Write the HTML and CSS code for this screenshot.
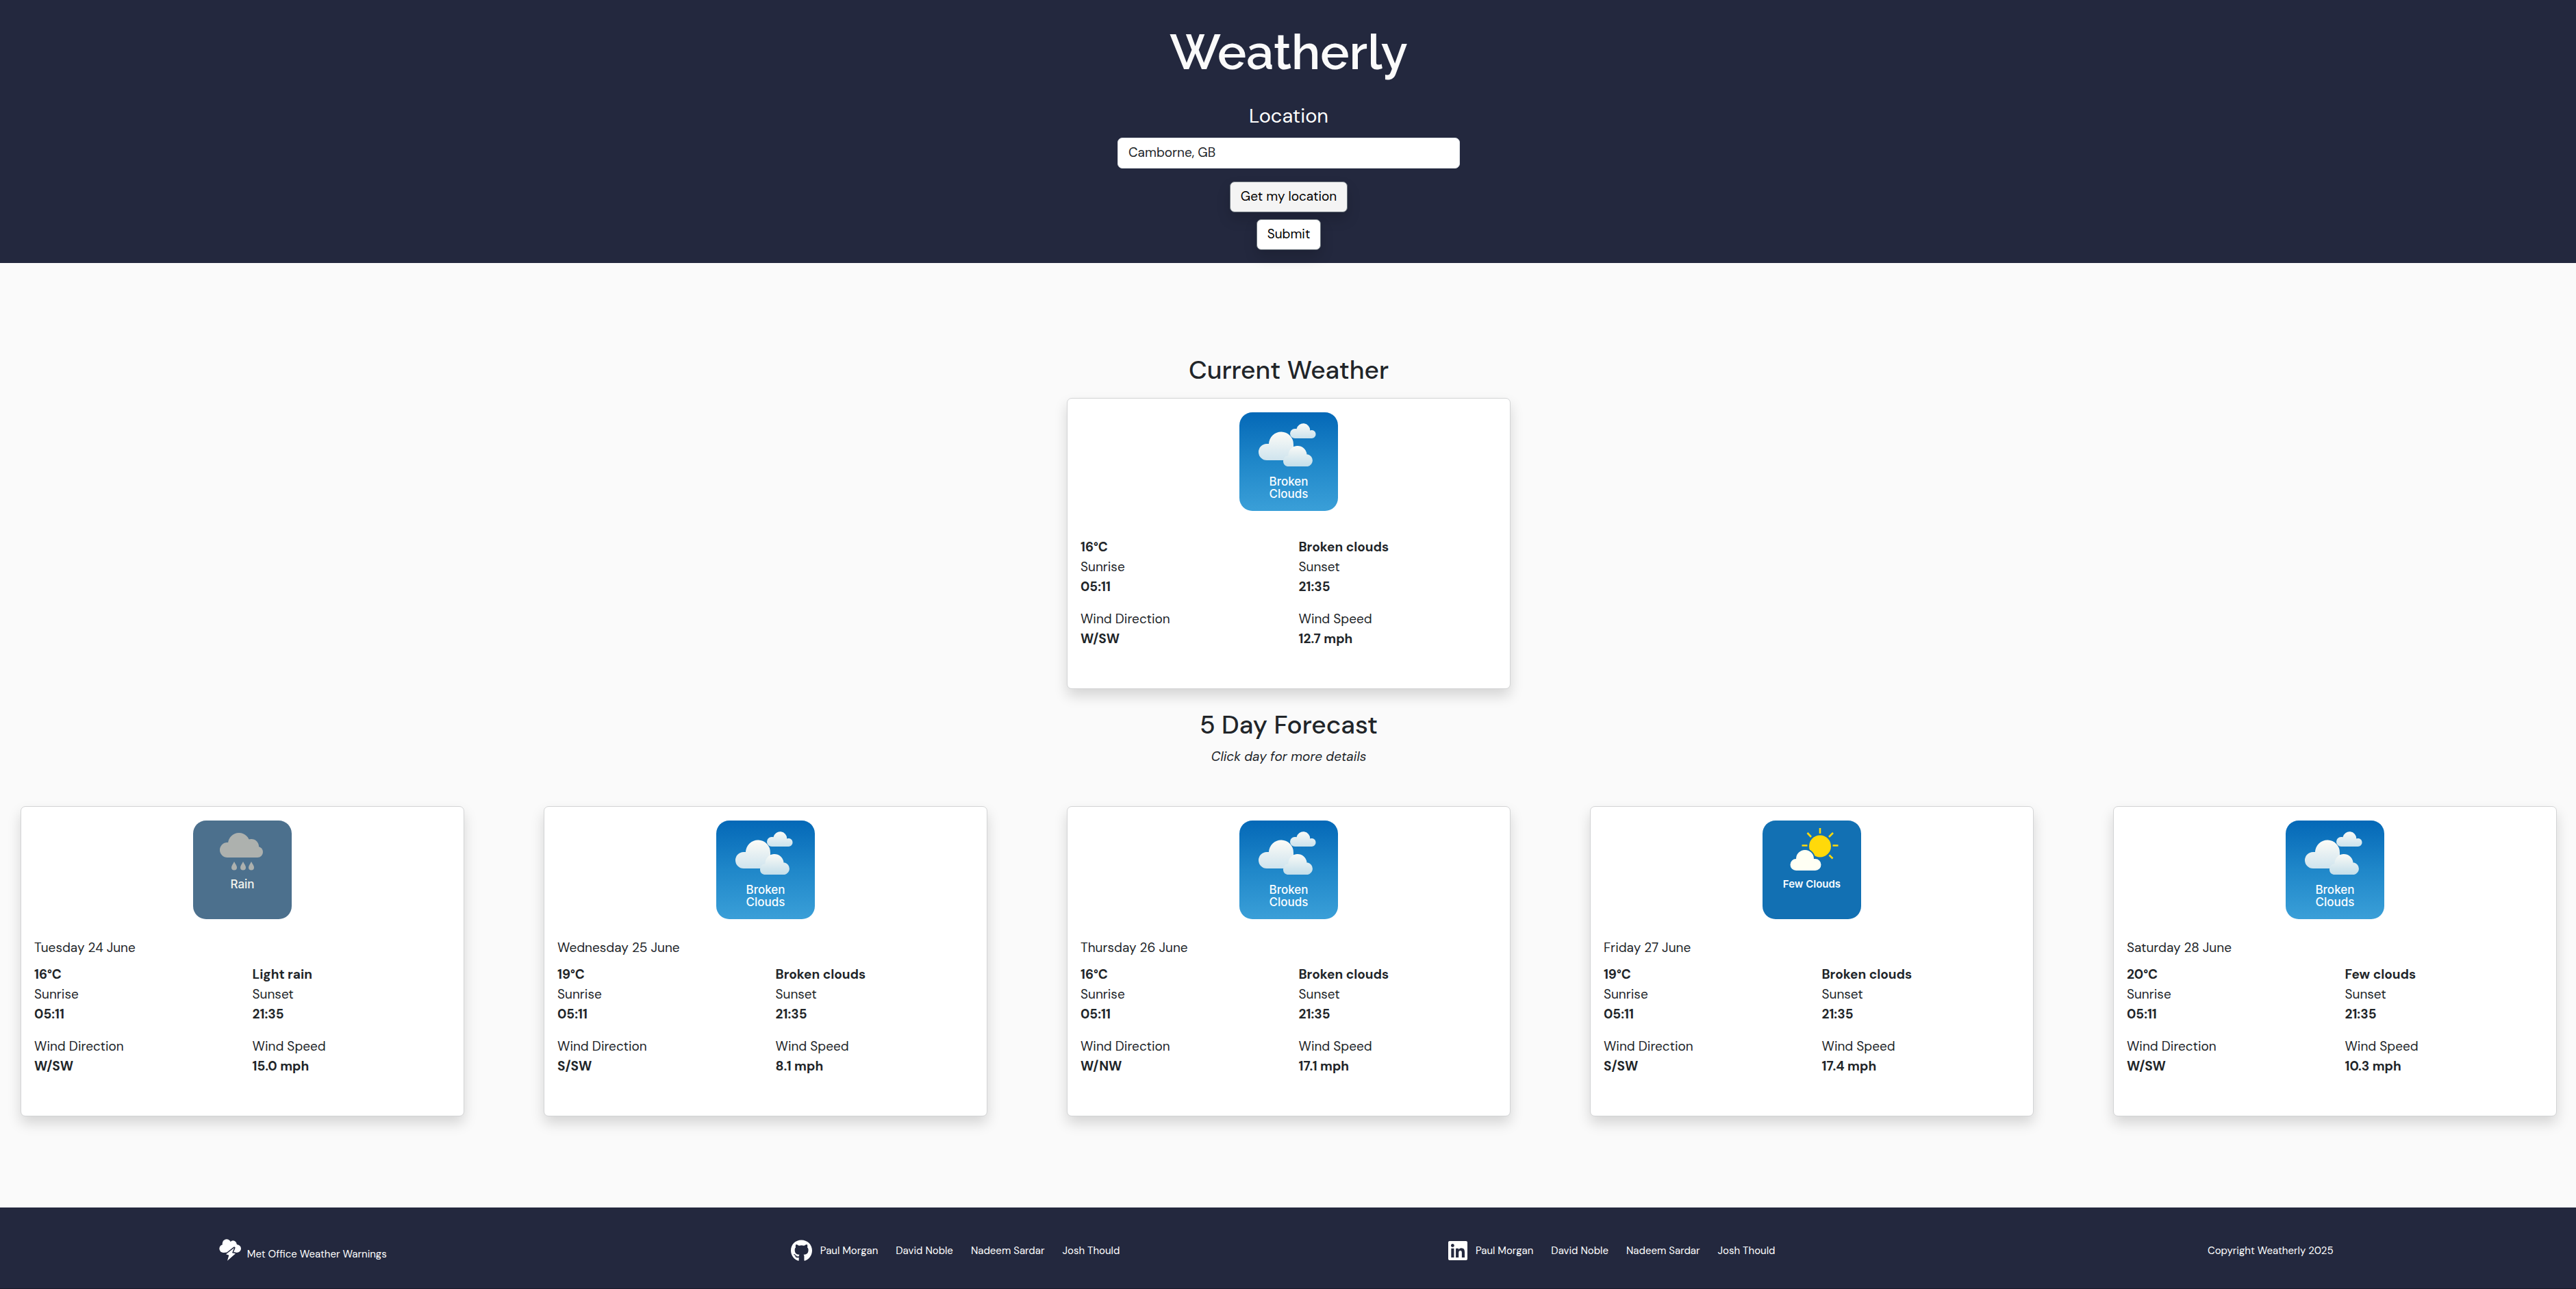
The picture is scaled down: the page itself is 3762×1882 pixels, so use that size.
FILE: index.html
```
<!DOCTYPE html>
<html lang="en">
<head>
<meta charset="utf-8">
<meta name="viewport" content="width=device-width, initial-scale=1">
<title>Weatherly</title>
<link rel="stylesheet" href="styles.css">
</head>
<body>
<svg class="sprite" aria-hidden="true">
  <defs>
    <linearGradient id="puff-big" gradientUnits="userSpaceOnUse" x1="0" y1="29" x2="0" y2="70"><stop offset="0" stop-color="#fcfbf7"/><stop offset="1" stop-color="#cfe4ee"/></linearGradient>
    <linearGradient id="puff-front" gradientUnits="userSpaceOnUse" x1="0" y1="48" x2="0" y2="79"><stop offset="0" stop-color="#fcfbf7"/><stop offset="1" stop-color="#c3deea"/></linearGradient>
    <linearGradient id="puff-small" gradientUnits="userSpaceOnUse" x1="0" y1="15" x2="0" y2="38"><stop offset="0" stop-color="#fcfbf7"/><stop offset="1" stop-color="#cbe2ed"/></linearGradient>
  </defs>
  <symbol id="broken-clouds" viewBox="0 0 144 144">
    <path fill="url(#puff-small)" d="M81 38a7 7 0 0 1 0-14 6 6 0 0 1 2.500.3 10 10 0 0 1 19.800 2.200 6 6 0 1 1 1.500 11.500z"/>
    <path fill="url(#puff-big)" d="M40 70a12 12 0 0 1 0-24h3a18 18 0 0 1 36 1v15l-12 8z"/>
    <path fill="url(#puff-front)" d="M70 79a8 8 0 0 1 0-15.500h1.500a13.500 13.500 0 0 1 27-2h1.500a9 9 0 0 1 0 17.500z"/>
  </symbol>
  <symbol id="rain" viewBox="0 0 144 144">
    <g fill="#adb1ae">
      <circle cx="50" cy="43" r="11"/><circle cx="67" cy="34" r="16"/><circle cx="85" cy="38" r="11"/><circle cx="94" cy="46" r="8"/><rect x="50" y="38" width="44" height="16"/>
      <path d="M60 60c2 4 4 6 4 8.500a4 4 0 0 1-8 0c0-2.500 2-4.500 4-8.500zM73 60c2 4 4 6 4 8.500a4 4 0 0 1-8 0c0-2.500 2-4.500 4-8.500zM85 60c2 4 4 6 4 8.500a4 4 0 0 1-8 0c0-2.500 2-4.500 4-8.500z"/>
    </g>
  </symbol>
  <symbol id="few-clouds" viewBox="0 0 144 144">
    <circle cx="84" cy="37.500" r="16" fill="#ffd90a"/>
    <path stroke="#ffd90a" stroke-width="2.600" d="M84 11v8M97 24l6-6M102.500 36.500h8M97.500 50.500l5 5M65.500 18l5.500 6M57.500 36.500h8"/>
    <path fill="#fffff4" stroke="#1270b3" stroke-width="4" paint-order="stroke" d="M49 73a8.500 8.500 0 0 1 0-17 13 13 0 0 1 26 0h2a8.500 8.500 0 0 1 0 17z"/>
  </symbol>
</svg>

<header class="site-header">
  <h1 class="brand">Weatherly</h1>
  <form class="search">
    <label class="search-label" for="location">Location</label>
    <input class="search-input" id="location" type="text" value="Camborne, GB">
    <button class="btn btn-active" type="button">Get my location</button>
    <button class="btn" type="submit">Submit</button>
  </form>
</header>

<main class="content">
  <h2 class="section-title">Current Weather</h2>
  <section class="current">
    <article class="card">
      <figure class="tile tile-broken"><svg aria-hidden="true"><use href="#broken-clouds"/></svg><figcaption>Broken<br>Clouds</figcaption></figure>
      <div class="card-body">
        <div class="facts"><p><b>16°C</b></p><p><b>Broken clouds</b></p><p>Sunrise<br><b>05:11</b></p><p>Sunset<br><b>21:35</b></p></div>
        <div class="facts"><p>Wind Direction<br><b>W/SW</b></p><p>Wind Speed<br><b>12.7 mph</b></p></div>
      </div>
    </article>
  </section>

  <h2 class="section-title section-title-forecast">5 Day Forecast</h2>
  <p class="hint">Click day for more details</p>
  <section class="forecast">
    <article class="card card-day">
      <figure class="tile tile-rain"><svg aria-hidden="true"><use href="#rain"/></svg><figcaption>Rain</figcaption></figure>
      <div class="card-body">
        <p class="day">Tuesday 24 June</p>
        <div class="facts"><p><b>16°C</b></p><p><b>Light rain</b></p><p>Sunrise<br><b>05:11</b></p><p>Sunset<br><b>21:35</b></p></div>
        <div class="facts"><p>Wind Direction<br><b>W/SW</b></p><p>Wind Speed<br><b>15.0 mph</b></p></div>
      </div>
    </article>
    <article class="card card-day">
      <figure class="tile tile-broken"><svg aria-hidden="true"><use href="#broken-clouds"/></svg><figcaption>Broken<br>Clouds</figcaption></figure>
      <div class="card-body">
        <p class="day">Wednesday 25 June</p>
        <div class="facts"><p><b>19°C</b></p><p><b>Broken clouds</b></p><p>Sunrise<br><b>05:11</b></p><p>Sunset<br><b>21:35</b></p></div>
        <div class="facts"><p>Wind Direction<br><b>S/SW</b></p><p>Wind Speed<br><b>8.1 mph</b></p></div>
      </div>
    </article>
    <article class="card card-day">
      <figure class="tile tile-broken"><svg aria-hidden="true"><use href="#broken-clouds"/></svg><figcaption>Broken<br>Clouds</figcaption></figure>
      <div class="card-body">
        <p class="day">Thursday 26 June</p>
        <div class="facts"><p><b>16°C</b></p><p><b>Broken clouds</b></p><p>Sunrise<br><b>05:11</b></p><p>Sunset<br><b>21:35</b></p></div>
        <div class="facts"><p>Wind Direction<br><b>W/NW</b></p><p>Wind Speed<br><b>17.1 mph</b></p></div>
      </div>
    </article>
    <article class="card card-day">
      <figure class="tile tile-few"><svg aria-hidden="true"><use href="#few-clouds"/></svg><figcaption>Few Clouds</figcaption></figure>
      <div class="card-body">
        <p class="day">Friday 27 June</p>
        <div class="facts"><p><b>19°C</b></p><p><b>Broken clouds</b></p><p>Sunrise<br><b>05:11</b></p><p>Sunset<br><b>21:35</b></p></div>
        <div class="facts"><p>Wind Direction<br><b>S/SW</b></p><p>Wind Speed<br><b>17.4 mph</b></p></div>
      </div>
    </article>
    <article class="card card-day">
      <figure class="tile tile-broken"><svg aria-hidden="true"><use href="#broken-clouds"/></svg><figcaption>Broken<br>Clouds</figcaption></figure>
      <div class="card-body">
        <p class="day">Saturday 28 June</p>
        <div class="facts"><p><b>20°C</b></p><p><b>Few clouds</b></p><p>Sunrise<br><b>05:11</b></p><p>Sunset<br><b>21:35</b></p></div>
        <div class="facts"><p>Wind Direction<br><b>W/SW</b></p><p>Wind Speed<br><b>10.3 mph</b></p></div>
      </div>
    </article>
  </section>
</main>

<footer class="site-footer">
  <a class="warnings" href="#">
    <svg class="storm" viewBox="24 22 96 96" aria-hidden="true">
      <g fill="#fff"><circle cx="43" cy="64" r="18"/><circle cx="57" cy="42" r="19"/><circle cx="85" cy="45" r="16"/><circle cx="103" cy="64" r="17"/><rect x="43" y="45" width="60" height="36"/></g>
      <path fill="#fff" stroke="#23283e" stroke-width="9" stroke-linejoin="round" paint-order="stroke" d="M90 61 54 89l13 4-7 24 36-31-15-3z"/>
    </svg>
    <span>Met Office Weather Warnings</span>
  </a>
  <nav class="people" aria-label="GitHub">
    <svg class="github" viewBox="0 0 496 512" aria-hidden="true"><path fill="#fff" d="M165.900 397.400c0 2-2.300 3.600-5.200 3.600-3.300.3-5.600-1.300-5.600-3.600 0-2 2.300-3.600 5.200-3.600 3-.3 5.600 1.300 5.600 3.600zm-31.100-4.500c-.7 2 1.300 4.300 4.300 4.900 2.600 1 5.600 0 6.200-2s-1.300-4.300-4.300-5.200c-2.600-.7-5.500.3-6.200 2.300zm44.200-1.700c-2.900.7-4.900 2.600-4.600 4.900.3 2 2.900 3.300 5.900 2.600 2.900-.7 4.900-2.600 4.600-4.600-.3-1.900-3-3.200-5.900-2.900zM244.800 8C106.100 8 0 113.300 0 252c0 110.900 69.800 205.800 169.500 239.200 12.800 2.300 17.300-5.600 17.300-12.100 0-6.200-.3-40.400-.3-61.400 0 0-70 15-84.700-29.800 0 0-11.400-29.100-27.800-36.600 0 0-22.900-15.700 1.600-15.400 0 0 24.900 2 38.600 25.800 21.900 38.600 58.600 27.500 72.900 20.900 2.300-16 8.800-27.100 16-33.700-55.900-6.200-112.300-14.300-112.300-110.500 0-27.500 7.600-41.300 23.600-58.900-2.600-6.500-11.100-33.300 2.600-67.900 20.900-6.500 69 27 69 27 20-5.600 41.500-8.500 62.800-8.500s42.800 2.900 62.800 8.500c0 0 48.100-33.600 69-27 13.700 34.700 5.200 61.400 2.600 67.900 16 17.700 25.800 31.500 25.800 58.900 0 96.500-58.900 104.200-114.800 110.500 9.200 7.900 17 22.900 17 46.400 0 33.700-.3 75.400-.3 83.600 0 6.500 4.600 14.400 17.300 12.100C428.200 457.800 496 362.900 496 252 496 113.300 383.500 8 244.800 8zM97.200 352.900c-1.300 1-1 3.300.7 5.200 1.600 1.600 3.900 2.300 5.200 1 1.300-1 1-3.300-.7-5.200-1.600-1.600-3.900-2.300-5.200-1zm-10.800-8.100c-.7 1.300.3 2.900 2.300 3.900 1.600 1 3.600.7 4.300-.7.7-1.300-.3-2.900-2.300-3.900-2-.6-3.600-.3-4.300.7zm32.400 35.600c-1.600 1.300-1 4.300 1.300 6.200 2.300 2.300 5.200 2.600 6.500 1 1.300-1.300.7-4.300-1.300-6.200-2.200-2.300-5.200-2.600-6.500-1zm-11.400-14.700c-1.600 1-1.600 3.600 0 5.900 1.600 2.300 4.300 3.300 5.600 2.300 1.600-1.300 1.600-3.900 0-6.200-1.400-2.300-4-3.300-5.600-2z"/></svg>
    <ul class="names"><li><a href="#">Paul Morgan</a></li><li><a href="#">David Noble</a></li><li><a href="#">Nadeem Sardar</a></li><li><a href="#">Josh Thould</a></li></ul>
  </nav>
  <nav class="people" aria-label="LinkedIn">
    <svg class="linkedin" viewBox="0 0 448 512" aria-hidden="true"><path fill="#fff" d="M416 32H31.900C14.300 32 0 46.500 0 64.300v383.400C0 465.500 14.300 480 31.900 480H416c17.600 0 32-14.500 32-32.300V64.300c0-17.800-14.400-32.300-32-32.300zM135.400 416H69V202.200h66.500V416zm-33.200-243c-21.300 0-38.500-17.300-38.500-38.500S80.900 96 102.200 96c21.200 0 38.500 17.300 38.500 38.500 0 21.300-17.200 38.500-38.500 38.500zm282.100 243h-66.400V312c0-24.800-.5-56.700-34.500-56.700-34.600 0-39.900 27-39.900 54.900V416h-66.400V202.200h63.700v29.200h.9c8.900-16.800 30.600-34.500 62.900-34.500 67.200 0 79.700 44.300 79.700 101.900V416z"/></svg>
    <ul class="names"><li><a href="#">Paul Morgan</a></li><li><a href="#">David Noble</a></li><li><a href="#">Nadeem Sardar</a></li><li><a href="#">Josh Thould</a></li></ul>
  </nav>
  <p class="copyright">Copyright Weatherly 2025</p>
</footer>
</body>
</html>
```
FILE: styles.css
```
*, *::before, *::after { box-sizing: border-box; }

body {
  margin: 0;
  background: #fafafa;
  color: #212529;
  font-family: "DM Sans", Inter, sans-serif;
  font-size: 19px;
  line-height: 29px;
}

h1, h2, p, ul, figure { margin: 0; }
ul { padding: 0; list-style: none; }
a { color: inherit; text-decoration: none; }
b { font-weight: 700; }

.sprite { position: absolute; width: 0; height: 0; }

/* Header */
.site-header {
  padding: 34px 20px 19px 22px;
  background: #23283e;
  color: #fff;
  text-align: center;
}
.brand {
  color: #fafafa;
  font-family: Raleway, Inter, sans-serif;
  font-size: 71px;
  font-weight: 600;
  line-height: 84px;
}
.search {
  display: flex;
  flex-direction: column;
  align-items: center;
  margin-top: 34px;
}
.search-label { font-size: 29px; line-height: 34px; }
.search-input {
  width: 100%;
  max-width: 500px;
  height: 45px;
  margin: 15px 0 19px;
  padding: 6px 15px 8px;
  border: 1px solid #dee2e6;
  border-radius: 7px;
  background: #fff;
  color: #212529;
  font: inherit;
}
.btn {
  padding: 6px 15px 8px;
  border: 1px solid #6c757d;
  border-radius: 7px;
  background: #fff;
  color: #000;
  font: inherit;
  box-shadow: 0 10px 19px rgba(0, 0, 0, .15);
  cursor: pointer;
}
.btn + .btn { margin-top: 10px; }
.btn-active { background: #f4f4f4; }

/* Main */
.content { padding: 134px 28px 133px 30px; }
.section-title {
  font-size: 37px;
  font-weight: 500;
  line-height: 44px;
  text-align: center;
}
.section-title-forecast { margin-top: 30px; }
.hint { margin-top: 10px; font-style: italic; text-align: center; }

.current, .forecast {
  display: grid;
  grid-template-columns: repeat(5, minmax(0, 1fr));
  column-gap: 3.13%;
}
.current { margin-top: 19px; }
.current .card { grid-column: 3; }
.forecast { margin-top: 58px; }

.card {
  padding: 20px 19px 58px;
  border: 1px solid #d3d4d5;
  border-radius: 7px;
  background: #fff;
  box-shadow: 0 10px 19px rgba(0, 0, 0, .15);
}
.card-day { cursor: pointer; }
.card-body { margin-top: 38px; }
.card-day .card-body { margin-top: 27px; }
.day { margin-bottom: 10px; }
.facts {
  display: grid;
  grid-template-columns: 1fr 1fr;
  column-gap: 29px;
}
.facts + .facts { margin-top: 18px; }

/* Weather tiles: drawing and caption share one grid cell */
.tile {
  display: grid;
  width: 144px;
  height: 144px;
  margin: 0 auto;
  border-radius: 19px;
  color: #fafdff;
  font-family: Inter, sans-serif;
  font-size: 17px;
  font-weight: 500;
  line-height: 18px;
  text-align: center;
}
.tile svg, .tile figcaption { grid-area: 1 / 1; }
.tile svg { width: 144px; height: 144px; }
.tile figcaption { padding-top: 84px; }
.tile-broken { background: linear-gradient(#0468b7, #1f87c9 50%, #3a9fd8); }
.tile-broken figcaption { padding-top: 92px; }
.tile-rain { background: #4c708d; color: #f4f5ee; }
.tile-few { background: #1270b3; font-size: 15px; font-weight: 600; }

/* Footer */
.site-footer {
  display: grid;
  grid-template-columns: 835fr 960fr 1109fr 538fr;
  align-items: center;
  padding: 46px 0 38px 8.5%;
  border-bottom: 1px solid #181b29;
  background: #23283e;
  color: #fff;
  font-size: 15px;
  line-height: 23px;
}
.warnings { display: flex; align-items: flex-end; gap: 9px; }
.storm { width: 32px; height: 32px; margin-bottom: 2px; }
.people { display: flex; align-items: center; gap: 12px; }
.github { width: 31px; height: 32px; }
.linkedin { width: 28px; height: 32px; }
.names { display: flex; flex-wrap: wrap; gap: 0 26px; }

@media (max-width: 2200px) {
  .current { grid-template-columns: minmax(0, 648px); justify-content: center; }
  .current .card { grid-column: 1; }
  .forecast { grid-template-columns: repeat(auto-fit, minmax(340px, 1fr)); gap: 32px; }
  .site-footer { grid-template-columns: repeat(auto-fit, minmax(300px, 1fr)); gap: 20px; padding-right: 20px; }
}
```
